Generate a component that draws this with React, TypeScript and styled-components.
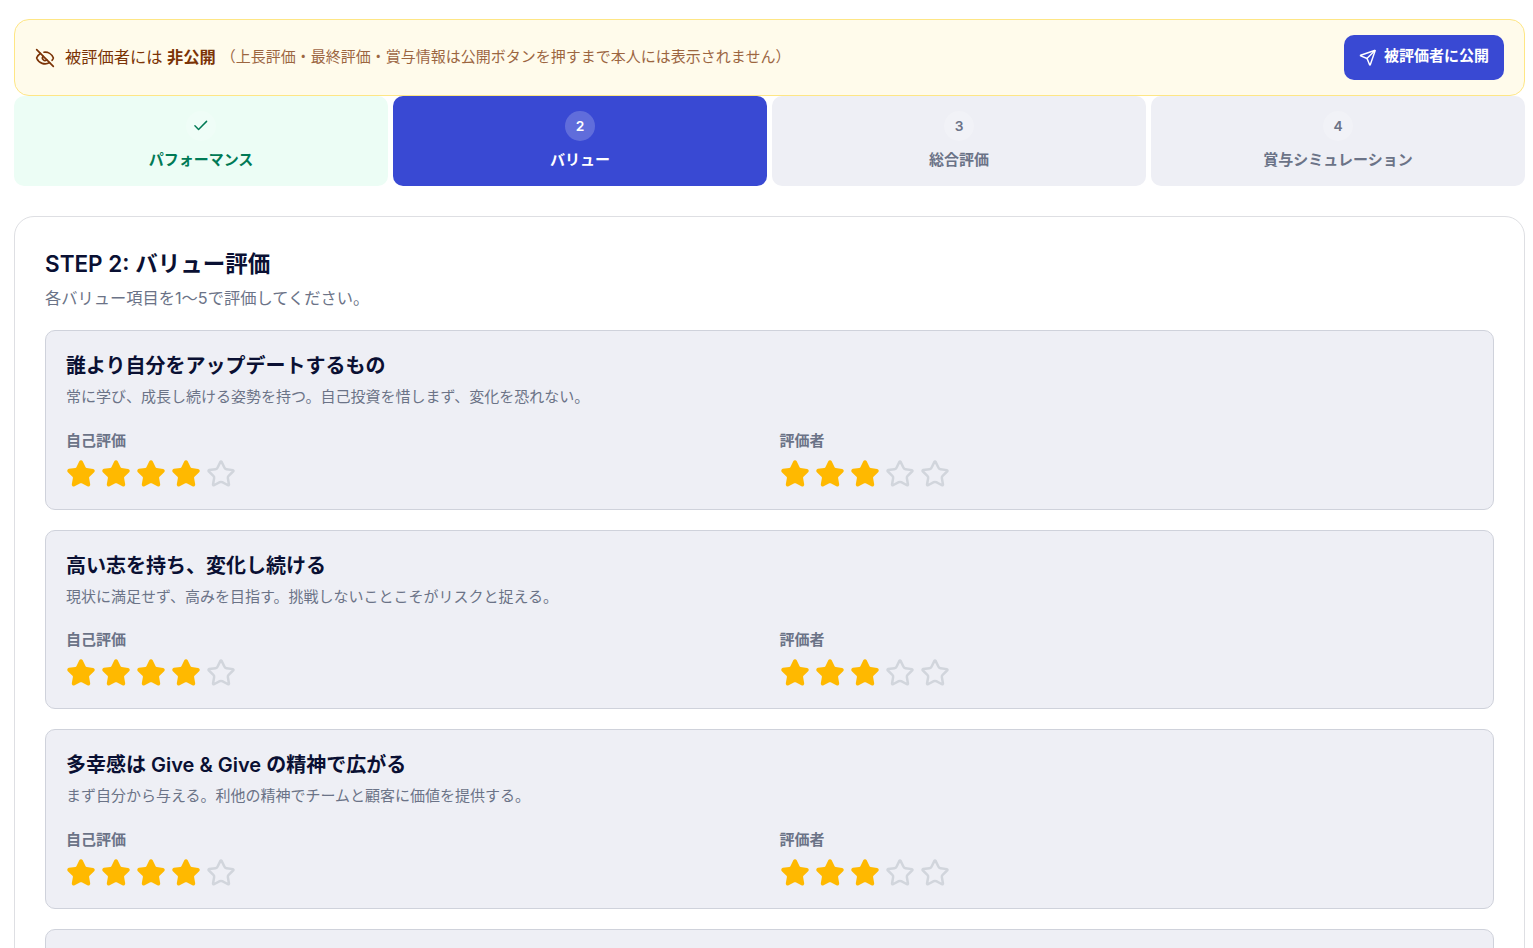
import React from "react";
import styled, { createGlobalStyle } from "styled-components";
import { Check, EyeOff, Send, Star } from "lucide-react";

const GlobalStyle = createGlobalStyle`
  *, *::before, *::after { box-sizing: border-box; }
  html, body { margin: 0; padding: 0; }
  body {
    background: #fff;
    color: #0a1033;
    font-family: Inter, "Noto Sans CJK JP", sans-serif;
    font-size: 16.25px;
    line-height: 1.5;
  }
  h2, h3, p { margin: 0; }
  svg { display: block; flex-shrink: 0; }
`;

const Page = styled.main`
  height: 948px;
  overflow: hidden;
  padding: 19px 8px 0 14px;
`;

const Notice = styled.section`
  display: flex;
  align-items: center;
  justify-content: space-between;
  padding: 15px 20px;
  border: 1px solid #fee685;
  border-radius: 15px;
  background: #fffbeb;
`;

const NoticeText = styled.div`
  display: flex;
  align-items: center;
  gap: 10px;
  color: #7b3306;
`;

const NoticeDetail = styled.span`
  margin-left: 5px;
  font-size: 15px;
  vertical-align: 1px;
  opacity: 0.75;
`;

const PublishButton = styled.button`
  display: flex;
  align-items: center;
  gap: 7.5px;
  height: 45px;
  padding: 0 15px;
  border: 0;
  border-radius: 10px;
  background: #3949d3;
  color: #fff;
  font: inherit;
  font-size: 15px;
  font-weight: 600;
`;

const ButtonLabel = styled.span`
  padding-bottom: 2px;
`;

const Steps = styled.nav`
  display: grid;
  grid-template-columns: repeat(4, 1fr);
  gap: 5px;
  margin-bottom: 30px;
`;

type StepState = "done" | "active" | "idle";

const stepColors: Record<StepState, { bg: string; text: string }> = {
  done: { bg: "#ecfdf5", text: "#007a55" },
  active: { bg: "#3949d3", text: "#fff" },
  idle: { bg: "#eeeff5", text: "#6b7387" },
};

const StepItem = styled.div<{ $state: StepState }>`
  display: flex;
  flex-direction: column;
  align-items: center;
  gap: 7.5px;
  padding: 15px;
  border-radius: 10px;
  background: ${(p) => stepColors[p.$state].bg};
  color: ${(p) => stepColors[p.$state].text};
  font-size: 15px;
  font-weight: 600;
`;

const StepBadge = styled.span`
  display: flex;
  align-items: center;
  justify-content: center;
  width: 30px;
  height: 30px;
  border-radius: 50%;
  background: rgba(255, 255, 255, 0.2);
  font-size: 13.75px;
`;

const Panel = styled.section`
  padding: 30px;
  border: 1px solid #dedfe3;
  border-radius: 20px;
`;

const PanelTitle = styled.h2`
  font-size: 22.5px;
  font-weight: 600;
`;

const PanelLead = styled.p`
  margin: 5px 0 20px;
  color: #6b7387;
`;

const CardList = styled.div`
  display: flex;
  flex-direction: column;
  gap: 20px;
`;

const Card = styled.article`
  padding: 20px;
  border: 1px solid #cfd2db;
  border-radius: 10px;
  background: #eeeff5;
`;

const CardTitle = styled.h3`
  font-size: 20px;
  font-weight: 600;
`;

const CardText = styled.p`
  margin: 5px 0 21px;
  color: #6b7387;
  font-size: 15px;
`;

const Ratings = styled.div`
  display: grid;
  grid-template-columns: 1fr 1fr;
  gap: 20px;
`;

const RatingLabel = styled.p`
  margin-bottom: 6.5px;
  color: #6b7387;
  font-size: 15px;
  font-weight: 600;
`;

const StarRow = styled.div`
  display: flex;
  gap: 5px;
`;

const StarIcon = styled(Star)<{ $on: boolean }>`
  width: 30px;
  height: 30px;
  color: ${(p) => (p.$on ? "#ffb900" : "#d1d5dc")};
  fill: ${(p) => (p.$on ? "#ffb900" : "none")};
`;

const steps: { label: string; state: StepState }[] = [
  { label: "パフォーマンス", state: "done" },
  { label: "バリュー", state: "active" },
  { label: "総合評価", state: "idle" },
  { label: "賞与シミュレーション", state: "idle" },
];

const values = [
  {
    title: "誰より自分をアップデートするもの",
    text: "常に学び、成長し続ける姿勢を持つ。自己投資を惜しまず、変化を恐れない。",
  },
  {
    title: "高い志を持ち、変化し続ける",
    text: "現状に満足せず、高みを目指す。挑戦しないことこそがリスクと捉える。",
  },
  {
    title: "多幸感は Give & Give の精神で広がる",
    text: "まず自分から与える。利他の精神でチームと顧客に価値を提供する。",
  },
];

function Rating({ label, score }: { label: string; score: number }) {
  return (
    <div>
      <RatingLabel>{label}</RatingLabel>
      <StarRow>
        {[1, 2, 3, 4, 5].map((n) => (
          <StarIcon key={n} $on={n <= score} />
        ))}
      </StarRow>
    </div>
  );
}

export default function App() {
  return (
    <Page lang="ja">
      <GlobalStyle />
      <Notice>
        <NoticeText>
          <EyeOff size={20} />
          <span>
            被評価者には <strong>非公開</strong>
            <NoticeDetail>
              （上長評価・最終評価・賞与情報は公開ボタンを押すまで本人には表示されません）
            </NoticeDetail>
          </span>
        </NoticeText>
        <PublishButton>
          <Send size={17.5} />
          <ButtonLabel>被評価者に公開</ButtonLabel>
        </PublishButton>
      </Notice>
      <Steps>
        {steps.map((s, i) => (
          <StepItem key={s.label} $state={s.state}>
            <StepBadge>{s.state === "done" ? <Check size={17.5} /> : i + 1}</StepBadge>
            <span>{s.label}</span>
          </StepItem>
        ))}
      </Steps>
      <Panel>
        <PanelTitle>STEP 2: バリュー評価</PanelTitle>
        <PanelLead>各バリュー項目を1〜5で評価してください。</PanelLead>
        <CardList>
          {values.map((v) => (
            <Card key={v.title}>
              <CardTitle>{v.title}</CardTitle>
              <CardText>{v.text}</CardText>
              <Ratings>
                <Rating label="自己評価" score={4} />
                <Rating label="評価者" score={3} />
              </Ratings>
            </Card>
          ))}
          <Card />
        </CardList>
      </Panel>
    </Page>
  );
}
